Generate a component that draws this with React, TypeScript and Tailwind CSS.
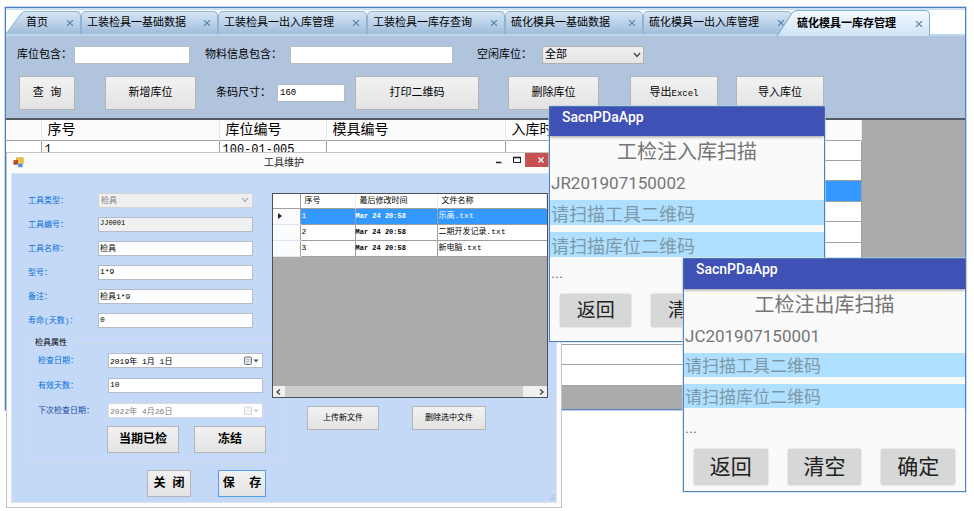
import React from "react";

const songFont = "font-['Liberation_Mono','Noto_Sans_CJK_SC',monospace]";
const uiFont = "font-['Liberation_Sans','Noto_Sans_CJK_SC',sans-serif]";
const phoneFont = "font-[Roboto,'Noto_Sans_CJK_SC',sans-serif]";

const greyButton =
  "border border-[#b4b4b4] bg-linear-to-b from-[#f2f2f2] to-[#e3e3e3] text-black leading-none whitespace-nowrap";

function CloseMark() {
  return (
    <svg viewBox="0 0 8 8" className="h-2 w-2" fill="none" stroke="#4d7fa5" strokeWidth="1.1">
      <path d="M1 1.2 L7 6.8 M7 1.2 L1 6.8" />
    </svg>
  );
}

type TabProps = { title: string; width: string; kind?: "first" | "middle" | "active" };

function Tab({ title, width, kind = "middle" }: TabProps) {
  const active = kind === "active";
  const slanted = kind !== "middle";
  const height = active ? "h-[26px] -mb-[2px] -ml-[15px] z-10" : "h-[23px]";
  const fill = active
    ? "bg-linear-to-b from-[#f4f9fe] to-[#cfe4f8] border-[#7fb0d0]"
    : "bg-linear-to-b from-[#d6e6f5] to-[#9fbcdb] border-[#8fb3d0]";
  return (
    <div className={`flex shrink-0 items-stretch ${width} ${height}`}>
      {slanted && (
        <svg viewBox="0 0 20 24" preserveAspectRatio="none" className="h-full w-5 shrink-0">
          <defs>
            <linearGradient id={`slant-${kind}`} x1="0" y1="0" x2="0" y2="1">
              <stop offset="0" stopColor={active ? "#f4f9fe" : "#d6e6f5"} />
              <stop offset="1" stopColor={active ? "#cfe4f8" : "#9fbcdb"} />
            </linearGradient>
          </defs>
          <path d="M0 24 L15 3 Q17 0.5 20 0.5 V24 Z" fill={`url(#slant-${kind})`} />
          <path d="M0 24 L15 3 Q17 0.5 20 0.5" fill="none" stroke="#83aecb" />
        </svg>
      )}
      <div
        className={`flex min-w-0 flex-1 items-center justify-between rounded-tr-[5px] border-t border-r pr-[6px] ${
          slanted ? "" : "rounded-tl-[5px] border-l pl-[5px]"
        } ${fill}`}
      >
        <button className={`text-[11px] leading-4 whitespace-nowrap text-black ${active ? "font-bold" : ""}`}>
          {title}
        </button>
        <button aria-label="close" className="shrink-0">
          <CloseMark />
        </button>
      </div>
    </div>
  );
}

function Chevron({ color }: { color: string }) {
  return (
    <svg viewBox="0 0 8 6" className="h-1.5 w-2" fill="none" stroke={color} strokeWidth="1.5">
      <path d="M1 1 L4 4.4 L7 1" />
    </svg>
  );
}

const toolInput = "h-[18px] border border-[#b5bcc6] bg-white px-0.5 text-black outline-none";
const toolButton = `h-[34px] text-[11px] ${greyButton}`;

function Toolbar() {
  return (
    <div className="h-[82px] bg-[#b0c4de] pt-[10px] text-[11px] leading-4 text-black">
      <div className="flex items-center pl-[11px]">
        <label htmlFor="slot" className="w-[57px] shrink-0">库位包含：</label>
        <input id="slot" className={`w-[116px] ${toolInput}`} />
        <label htmlFor="material" className="ml-[15px] w-[85px] shrink-0">物料信息包含：</label>
        <input id="material" className={`w-[163px] ${toolInput}`} />
        <label htmlFor="free" className="ml-6 w-[65px] shrink-0">空闲库位：</label>
        <div className="relative">
          <select
            id="free"
            className="block h-[18px] w-[102px] appearance-none border border-[#b0b0b0] bg-linear-to-b from-[#efefef] to-[#e5e5e5] pl-0.5 text-[11px] leading-4"
          >
            <option>全部</option>
          </select>
          <span className="pointer-events-none absolute top-1.5 right-[3px]">
            <Chevron color="#4a4a4a" />
          </span>
        </div>
      </div>
      <div className="mt-3 flex items-center pl-[13px]">
        <button className={`w-14 ${toolButton}`}>查 询</button>
        <button className={`ml-[30px] w-[91px] ${toolButton}`}>新增库位</button>
        <label htmlFor="size" className="ml-5 w-[61px] shrink-0">条码尺寸：</label>
        <input id="size" defaultValue="160" className={`w-[68px] text-[9px] ${toolInput}`} />
        <button className={`ml-[10px] w-[124px] ${toolButton}`}>打印二维码</button>
        <button className={`ml-[29px] w-[91px] ${toolButton}`}>删除库位</button>
        <button className={`ml-[31px] w-[88px] ${toolButton}`}>
          导出<span className="text-[9px]">Excel</span>
        </button>
        <button className={`ml-[18px] w-[88px] ${toolButton}`}>导入库位</button>
      </div>
    </div>
  );
}

const stockRows = Array.from({ length: 12 }, (_, i) => (i === 0 ? ["1", "100-01-005"] : ["", ""]));

function StockGrid() {
  return (
    <div className="border-t-2 border-[#555b63] bg-[#ababab] pb-[23px]">
      <table className="h-[266px] w-[856px] table-fixed border-collapse text-left text-[14px] leading-4 text-black">
        <colgroup>
          <col className="w-[35px]" />
          <col className="w-[178px]" />
          <col className="w-[107px]" />
          <col className="w-[179px]" />
          <col />
        </colgroup>
        <thead>
          <tr className="h-5 border-b border-[#a0a0a0] bg-[#fcfcfc]">
            <th className="border-r border-[#dfe8f0]" />
            {["序号", "库位编号", "模具编号", "入库时间"].map((h) => (
              <th key={h} className="border-r border-[#dfe8f0] p-0 pl-1.5 font-normal">
                {h}
              </th>
            ))}
          </tr>
        </thead>
        <tbody>
          {stockRows.map((row, i) => (
            <tr key={i} className={`h-5 border-b border-[#a0a0a0] ${i === 2 ? "bg-[#3399ff]" : "bg-white"}`}>
              <td className="border-r border-[#a0a0a0] p-0" />
              <td className="border-r border-[#a0a0a0] p-0 pl-[3px] text-[12px]">{row[0]}</td>
              <td className="border-r border-[#a0a0a0] p-0 pl-[3px] text-[12px]">{row[1]}</td>
              <td className="border-r border-[#a0a0a0] p-0" />
              <td className="border-r border-[#a0a0a0] p-0" />
            </tr>
          ))}
        </tbody>
      </table>
    </div>
  );
}

function MainWindow() {
  return (
    <section className={`mr-2 ml-[5px] border border-[#4f81bd] bg-white ring-1 ring-[#c6d9f1] ${songFont}`}>
      <div className="h-0.5 bg-[#cddff2]" />
      <nav className="flex h-[26px] items-end border-b-2 border-[#bcd8ec]">
        <Tab title="首页" width="w-[75px]" kind="first" />
        <Tab title="工装检具一基础数据" width="w-[137px]" />
        <Tab title="工装检具一出入库管理" width="w-[149px]" />
        <Tab title="工装检具一库存查询" width="w-[138px]" />
        <Tab title="硫化模具一基础数据" width="w-[138px]" />
        <Tab title="硫化模具一出入库管理" width="w-[149px]" />
        <Tab title="硫化模具一库存管理" width="w-[153px]" kind="active" />
      </nav>
      <Toolbar />
      <StockGrid />
    </section>
  );
}

const formFields = [
  { id: "code", label: "工具编号：", value: "JJ0001", size: "text-[7px]", readOnly: true },
  { id: "name", label: "工具名称：", value: "检具", size: "text-[8px]" },
  { id: "model", label: "型号：", value: "1*9", size: "text-[8px]" },
  { id: "note", label: "备注：", value: "检具1*9", size: "text-[8px]" },
  { id: "life", label: "寿命(天数)：", value: "0", size: "text-[8px]" },
];

const formInput = "h-[15px] w-[155px] border border-[#b3bcc9] px-px pb-[3px] leading-[10px] outline-none";
const formLabel = "w-[70px] shrink-0 whitespace-nowrap";

function CalendarIcon({ faded }: { faded?: boolean }) {
  return (
    <svg viewBox="0 0 18 10" className={`h-[10px] w-[18px] ${faded ? "opacity-30" : ""}`}>
      <rect x="1.5" y="1" width="7" height="7.5" rx="1" fill="#e4e7ee" stroke="#6f7683" />
      <path d="M3 3.5h4.5M3 5.2h4.5M3 7h3" stroke="#a5acb8" strokeWidth=".6" />
      <path d="M10.5 3.5h5l-2.5 3z" fill="#3f4f66" />
    </svg>
  );
}

function DateField({ id, label, value, faded }: { id: string; label: string; value: string; faded?: boolean }) {
  return (
    <div className="flex h-[15px] items-center">
      <label htmlFor={id} className={`${formLabel} ${faded ? "text-[#17479a]" : "text-[#0a6fd6]"}`}>{label}</label>
      <div className="relative">
        <input
          id={id}
          defaultValue={value}
          disabled={faded}
          className={`block h-[15px] w-[155px] border bg-white px-px text-[8px] leading-[10px] outline-none ${
            faded ? "border-[#d5dbe3] text-[#7d7d7d]" : "border-[#b3bcc9] text-black"
          }`}
        />
        <span className="absolute top-[3px] right-0.5">
          <CalendarIcon faded={faded} />
        </span>
      </div>
    </div>
  );
}

function ToolForm() {
  return (
    <div className="w-[244px] shrink-0">
      <div className="flex flex-col gap-[9px]">
        <div className="flex h-[15px] items-center">
          <label htmlFor="kind" className={`text-[#0a6fd6] ${formLabel}`}>工具类型：</label>
          <div className="relative">
            <select
              id="kind"
              disabled
              className="block h-[15px] w-[155px] appearance-none border border-[#d0d3d8] bg-[#efefef] pl-0.5 text-[8px] leading-[12px] text-[#7d7d7d] opacity-100"
            >
              <option>检具</option>
            </select>
            <span className="pointer-events-none absolute top-1 right-1">
              <Chevron color="#b3b3b3" />
            </span>
          </div>
        </div>
        {formFields.map((f) => (
          <div key={f.id} className="flex h-[15px] items-center">
            <label htmlFor={f.id} className={`text-[#0a6fd6] ${formLabel}`}>{f.label}</label>
            <input
              id={f.id}
              defaultValue={f.value}
              readOnly={f.readOnly}
              className={`${formInput} ${f.size} ${f.readOnly ? "bg-[#f0f0f0]" : "bg-white"}`}
            />
          </div>
        ))}
      </div>
      <fieldset className="mt-[10px] h-[125px] w-[254px] border border-[#d0dbea] pl-[9px]">
        <legend className="-ml-1 px-px leading-[10px]">检具属性</legend>
        <div className="flex flex-col gap-[10px] pt-[5px]">
          <DateField id="checked" label="检查日期：" value="2019年 1月 1日" />
          <div className="flex h-[15px] items-center">
            <label htmlFor="days" className={`text-[#0a6fd6] ${formLabel}`}>有效天数：</label>
            <input id="days" defaultValue="10" className={`${formInput} bg-white text-[8px]`} />
          </div>
          <DateField id="next" label="下次检查日期：" value="2022年 4月26日" faded />
        </div>
        <div className="mt-2 flex gap-[15px] pl-[69px]">
          <button className={`h-[27px] w-[72px] text-[12px] font-bold ${greyButton}`}>当期已检</button>
          <button className={`h-[27px] w-[72px] text-[12px] font-bold ${greyButton}`}>冻结</button>
        </div>
      </fieldset>
      <div className="mt-[7px] flex gap-[27px] pl-[119px]">
        <button className={`h-[27px] w-11 shrink-0 text-[12px] font-bold ${greyButton}`}>关 闭</button>
        <button className="h-[27px] w-12 shrink-0 border border-[#569de5] bg-linear-to-b from-[#f2f2f2] to-[#e3e3e3] text-[12px] leading-none font-bold whitespace-pre text-black">
          保  存
        </button>
      </div>
    </div>
  );
}

const files = [
  ["1", "Mar 24 20:58", "乐高.txt"],
  ["2", "Mar 24 20:58", "二期开发记录.txt"],
  ["3", "Mar 24 20:58", "新电脑.txt"],
];

function FilePanel() {
  return (
    <div className="relative min-w-0 flex-1">
      <div className="mr-2 flex h-[205px] flex-col border border-[#4b5058] bg-[#ababab]">
        <table className="w-full table-fixed border-collapse text-left text-[8px] leading-[10px] text-black">
          <colgroup>
            <col className="w-[27px]" />
            <col className="w-[55px]" />
            <col className="w-[82px]" />
            <col />
          </colgroup>
          <thead>
            <tr className="h-[14px] border-b border-[#a0a0a0] bg-white">
              <th className="border-r border-[#a0a0a0] p-0" />
              {["序号", "最后修改时间", "文件名称"].map((h) => (
                <th key={h} className="border-r border-[#e4ebf3] p-0 pl-1 font-normal">
                  {h}
                </th>
              ))}
            </tr>
          </thead>
          <tbody>
            {files.map((f, i) => (
              <tr
                key={f[0]}
                className={`h-4 border-b border-[#a0a0a0] ${i === 0 ? "bg-[#3399ff] text-white" : "bg-white"}`}
              >
                <td className="border-r border-b border-[#a0a0a0] border-b-[#dde6ee] bg-[#fafbfc] p-0 pl-[5px]">
                  {i === 0 && (
                    <svg viewBox="0 0 4 6" className="h-1.5 w-1">
                      <path d="M0 0L4 3L0 6z" fill="#222" />
                    </svg>
                  )}
                </td>
                <td className="border-r border-[#a0a0a0] p-0 pl-px">{f[0]}</td>
                <td className="border-r border-[#a0a0a0] p-0 text-[7px] font-bold">{f[1]}</td>
                <td className="p-0 pl-px">{f[2]}</td>
              </tr>
            ))}
          </tbody>
        </table>
        <div className="mt-auto flex h-[11px] items-center bg-[#f0f0f0]">
          <svg viewBox="0 0 12 10" className="h-[10px] w-3" fill="none" stroke="#444" strokeWidth="1.4">
            <path d="M7 2.5L4 5L7 7.5" />
          </svg>
          <div className="mr-6 h-[11px] flex-1 bg-[#cdcdcd]" />
          <svg viewBox="0 0 12 10" className="-ml-3 h-[10px] w-3" fill="none" stroke="#444" strokeWidth="1.4">
            <path d="M5 2.5L8 5L5 7.5" />
          </svg>
        </div>
      </div>
      <div className="mt-2 flex gap-[33px] pl-[35px]">
        <button className={`h-6 w-[72px] text-[8px] ${greyButton}`}>上传新文件</button>
        <button className={`h-6 w-[74px] text-[8px] ${greyButton}`}>删除选中文件</button>
      </div>
    </div>
  );
}

function ToolDialog() {
  return (
    <section className="absolute top-[152px] left-[6px] w-[556px] border border-[#c3c3c3] bg-[#fcfcfc] px-1 pb-1">
      <header className={`grid h-5 grid-cols-[1fr_auto_1fr] items-start ${uiFont}`}>
        <svg viewBox="0 0 12 12" className="mt-1 ml-0.5 h-[11px] w-[11px]">
          <rect x="4" y="1" width="7" height="6" fill="#f4c53a" stroke="#c99a22" strokeWidth=".8" />
          <rect x="1" y="4" width="4" height="4" fill="#c8442c" stroke="#8f2c1a" strokeWidth=".6" />
          <rect x="5.5" y="7" width="5" height="4" fill="#4f86e0" stroke="#b8cbe8" strokeWidth=".6" />
        </svg>
        <h1 className="pt-[3px] text-[10px] leading-[14px] text-[#222]">工具维护</h1>
        <div className="flex items-start justify-end">
          <button aria-label="minimize" className="mt-1 mr-[10px]">
            <svg viewBox="0 0 8 8" className="h-2 w-2"><path d="M1 5.5h5.5" stroke="#222" strokeWidth="1.5" /></svg>
          </button>
          <button aria-label="maximize" className="mt-[3px] mr-1">
            <svg viewBox="0 0 8 8" className="h-2 w-2" fill="none" stroke="#222">
              <rect x=".5" y="1.5" width="7" height="5" />
              <path d="M0 1.5h8" strokeWidth="1.6" />
            </svg>
          </button>
          <button aria-label="close" className="flex h-[14px] w-8 items-center bg-[#c75050] pl-[13px]">
            <svg viewBox="0 0 6 6" className="h-1.5 w-1.5" stroke="#fff" strokeWidth="1.3">
              <path d="M.5 .5L5.5 5.5M5.5 .5L.5 5.5" />
            </svg>
          </button>
        </div>
      </header>
      <div className={`relative flex h-[330px] border border-[#dde3ea] bg-[#c3d9f7] pt-[19px] pl-4 text-[8px] leading-[10px] text-black ${songFont}`}>
        <ToolForm />
        <FilePanel />
        <svg viewBox="0 0 6 6" className="absolute right-px bottom-px h-1.5 w-1.5" fill="#9aa9bf">
          <path d="M4.5 0h1v1h-1zM2.5 2h1v1h-1zM4.5 2h1v1h-1zM.5 4h1v1h-1zM2.5 4h1v1h-1zM4.5 4h1v1h-1z" />
        </svg>
      </div>
    </section>
  );
}

type PhoneProps = {
  id: string;
  place: string;
  title: string;
  code: string;
  actions: string[];
  barHeight: string;
  fieldStyle: string;
  dotsStyle: string;
  buttonStyle: string;
};

function Phone({ id, place, title, code, actions, barHeight, fieldStyle, dotsStyle, buttonStyle }: PhoneProps) {
  const field = `block w-full bg-[#b0e0ff] px-px pt-[3px] text-[#7c98a8] outline-none placeholder:text-[#7c98a8] placeholder:opacity-100 ${fieldStyle}`;
  return (
    <section className={`absolute border border-[#4f81bd] bg-[#fafafa] ring-1 ring-[#c6d9f1]/60 ${place} ${phoneFont}`}>
      <header className={`bg-[#3f51b5] pt-px pl-3 text-[14px] leading-[18px] font-medium text-white shadow-[0_1px_3px_rgba(0,0,0,0.4)] ${barHeight}`}>
        SacnPDaApp
      </header>
      <h2 className="mt-1 text-center text-[20px] leading-6 text-[#757575]">{title}</h2>
      <p className="mt-[9px] pl-px text-[17px] leading-5 text-[#757575]">{code}</p>
      <div className="mt-[7px] flex flex-col gap-[7px]">
        <input aria-label="tool" id={`${id}-tool`} placeholder="请扫描工具二维码" className={field} />
        <input aria-label="slot" id={`${id}-slot`} placeholder="请扫描库位二维码" className={field} />
      </div>
      <p className={`pl-px text-[15px] leading-5 text-[#757575] ${dotsStyle}`}>...</p>
      <div className="grid grid-cols-3 gap-5 px-[10px]">
        {actions.map((b) => (
          <button
            key={b}
            className={`rounded-xs bg-[#d6d7d7] leading-none text-[#212121] shadow-[0_0_2px_rgba(0,0,0,0.25)] ${buttonStyle}`}
          >
            {b}
          </button>
        ))}
      </div>
    </section>
  );
}

export default function App() {
  return (
    <main className="relative min-h-screen w-full overflow-hidden bg-white pt-[7px]">
      <MainWindow />
      <ToolDialog />
      <Phone
        id="in"
        place="top-[106px] left-[549px] w-[276px] pb-[14px]"
        title="工检注入库扫描"
        code="JR201907150002"
        actions={["返回", "清空"]}
        barHeight="h-[29px]"
        fieldStyle="h-[25px] text-[18px]"
        dotsStyle="mt-1.5 mb-[11px]"
        buttonStyle="h-[33px] text-[19px]"
      />
      <Phone
        id="out"
        place="top-[258px] left-[683px] w-[283px] pb-1.5"
        title="工检注出库扫描"
        code="JC201907150001"
        actions={["返回", "清空", "确定"]}
        barHeight="h-[30px]"
        fieldStyle="h-[24px] text-[17px]"
        dotsStyle="mt-[10px] mb-[11px]"
        buttonStyle="h-[36px] text-[21px]"
      />
    </main>
  );
}
